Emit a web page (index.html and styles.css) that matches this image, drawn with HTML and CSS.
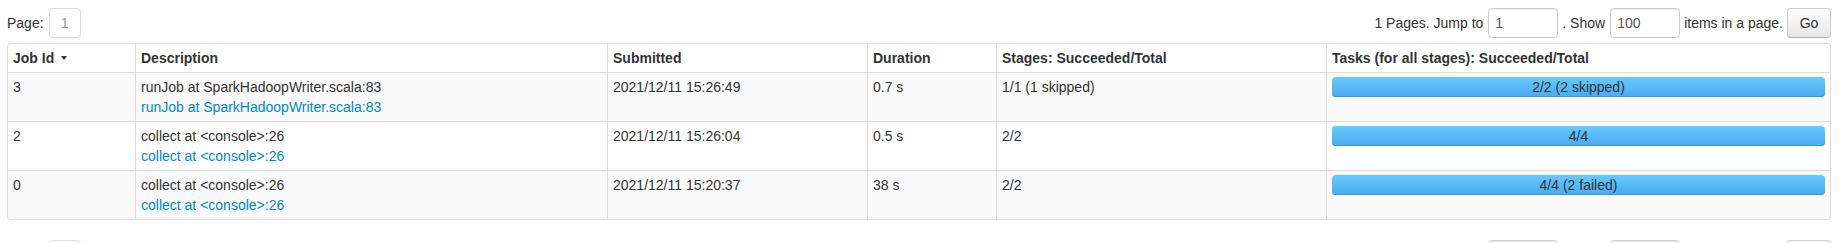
FILE: index.html
```html
<!DOCTYPE html>
<html>
<head>
<meta charset="utf-8">
<title>Jobs</title>
<link rel="stylesheet" href="styles.css">
</head>
<body>
<div class="page">
  <div class="pager pager-top">
    <div class="pager-left">
      <span class="lbl">Page:</span>
      <span class="page-box">1</span>
    </div>
    <form class="pager-right">
      <span class="lbl gap5">1 Pages. Jump to</span>
      <input class="inp gap4" type="text" value="1">
      <span class="lbl gap5">. Show</span>
      <input class="inp gap4" type="text" value="100">
      <span class="lbl gap4">items in a page.</span>
      <button class="btn" type="button">Go</button>
    </form>
  </div>

  <table class="jobs">
    <thead>
      <tr>
        <th class="c-id">Job Id <svg class="caret" width="6" height="4" viewBox="0 0 6 4"><polygon points="0,0 6,0 3,4" fill="#333"/></svg></th>
        <th class="c-desc">Description</th>
        <th class="c-sub">Submitted</th>
        <th class="c-dur">Duration</th>
        <th class="c-stg">Stages: Succeeded/Total</th>
        <th class="c-task">Tasks (for all stages): Succeeded/Total</th>
      </tr>
    </thead>
    <tbody>
      <tr>
        <td>3</td>
        <td><div>runJob at SparkHadoopWriter.scala:83</div><a class="name-link" href="#">runJob at SparkHadoopWriter.scala:83</a></td>
        <td>2021/12/11 15:26:49</td>
        <td>0.7 s</td>
        <td>1/1 (1 skipped)</td>
        <td><div class="bar">2/2 (2 skipped)</div></td>
      </tr>
      <tr>
        <td>2</td>
        <td><div>collect at &lt;console&gt;:26</div><a class="name-link" href="#">collect at &lt;console&gt;:26</a></td>
        <td>2021/12/11 15:26:04</td>
        <td>0.5 s</td>
        <td>2/2</td>
        <td><div class="bar">4/4</div></td>
      </tr>
      <tr>
        <td>0</td>
        <td><div>collect at &lt;console&gt;:26</div><a class="name-link" href="#">collect at &lt;console&gt;:26</a></td>
        <td>2021/12/11 15:20:37</td>
        <td>38 s</td>
        <td>2/2</td>
        <td><div class="bar">4/4 (2 failed)</div></td>
      </tr>
    </tbody>
  </table>

  <div class="pager">
    <div class="pager-left">
      <span class="lbl">Page:</span>
      <span class="page-box">1</span>
    </div>
    <form class="pager-right">
      <span class="lbl gap5">1 Pages. Jump to</span>
      <input class="inp gap4" type="text" value="1">
      <span class="lbl gap5">. Show</span>
      <input class="inp gap4" type="text" value="100">
      <span class="lbl gap4">items in a page.</span>
      <button class="btn" type="button">Go</button>
    </form>
  </div>
</div>
</body>
</html>
```

FILE: styles.css
```css
html, body {
  margin: 0;
  padding: 0;
  background: #fff;
}

body {
  font-family: "Liberation Sans", Arial, Helvetica, sans-serif;
  font-size: 14px;
  line-height: 20px;
  color: #333;
}

.page {
  padding: 0 15px 0 7px;
}

.pager {
  display: flex;
  justify-content: space-between;
  align-items: center;
  height: 30px;
}

.pager-top {
  margin-top: 8px;
  margin-bottom: 5px;
}

.pager-left,
.pager-right {
  display: flex;
  align-items: center;
  margin: 0;
}

.lbl {
  white-space: nowrap;
}

.gap5 {
  margin-right: 5px;
}

.gap4 {
  margin-right: 4px;
}

.pager-left .lbl {
  margin-right: 5px;
}

.page-box {
  display: inline-block;
  box-sizing: border-box;
  width: 32px;
  height: 30px;
  line-height: 20px;
  padding: 4px 0;
  text-align: center;
  color: #999;
  border: 1px solid #ddd;
  border-radius: 4px;
  box-shadow: 0 1px 2px rgba(0, 0, 0, 0.05);
}

.inp {
  box-sizing: border-box;
  width: 70px;
  height: 30px;
  padding: 4px 6px;
  font-family: inherit;
  font-size: 14px;
  line-height: 20px;
  color: #555;
  background: #fff;
  border: 1px solid #ccc;
  border-radius: 4px;
  box-shadow: inset 0 1px 1px rgba(0, 0, 0, 0.075);
  outline: none;
}

.btn {
  box-sizing: border-box;
  width: 44px;
  height: 30px;
  padding: 4px 0;
  font-family: inherit;
  font-size: 14px;
  line-height: 20px;
  color: #333;
  background: linear-gradient(to bottom, #ffffff, #e6e6e6);
  border: 1px solid #ccc;
  border-bottom-color: #b3b3b3;
  border-radius: 4px;
  box-shadow: inset 0 1px 0 rgba(255, 255, 255, 0.2), 0 1px 2px rgba(0, 0, 0, 0.05);
}

.jobs {
  width: 100%;
  table-layout: fixed;
  border-collapse: separate;
  border-spacing: 0;
  border: 1px solid #ddd;
  border-left: 0;
  border-radius: 4px;
  margin-bottom: 20px;
}

.jobs th,
.jobs td {
  box-sizing: border-box;
  padding: 4px 5px;
  line-height: 20px;
  text-align: left;
  vertical-align: top;
  border-left: 1px solid #ddd;
  border-top: 1px solid #ddd;
}

.jobs th {
  font-weight: bold;
  vertical-align: bottom;
  border-top: 0;
}

.jobs thead tr:first-child th:first-child {
  border-top-left-radius: 4px;
}

.jobs tbody tr:last-child td:first-child {
  border-bottom-left-radius: 4px;
}

.jobs tbody tr:last-child td:last-child {
  border-bottom-right-radius: 4px;
}

.jobs tbody tr:nth-child(odd) td {
  background: #f9f9f9;
}

.c-id { width: 128px; }
.c-desc { width: 472px; }
.c-sub { width: 260px; }
.c-dur { width: 129px; }
.c-stg { width: 330px; }

.caret {
  display: inline-block;
  width: 6px;
  height: 4px;
  margin-left: 3px;
  vertical-align: 3px;
}

.name-link {
  display: block;
  color: #0088cc;
  text-decoration: none;
}

.bar {
  height: 20px;
  line-height: 20px;
  text-align: center;
  color: #333;
  background: linear-gradient(to bottom, #66caff 0%, #4aaaee 100%);
  border-radius: 4px;
  box-shadow: inset 0 -1px 0 #3f97d8;
}
```
